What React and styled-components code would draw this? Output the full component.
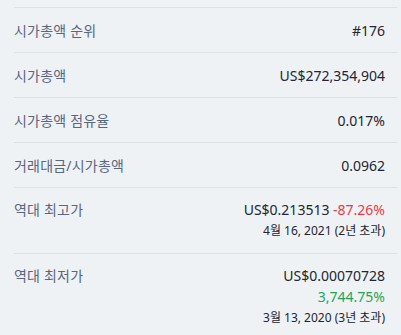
import styled, { createGlobalStyle } from "styled-components";

const GlobalStyle = createGlobalStyle`
  * { box-sizing: border-box; }
  body {
    margin: 0;
    background: #eff2f5;
    font-family: "Noto Sans", "Noto Sans CJK KR", sans-serif;
  }
`;

const stats = [
  { label: "시가총액 순위", value: "#176" },
  { label: "시가총액", value: "US$272,354,904" },
  { label: "시가총액 점유율", value: "0.017%" },
  { label: "거래대금/시가총액", value: "0.0962" },
];

function App() {
  return (
    <>
      <GlobalStyle />
      <Wrapper>
        <List>
          {stats.map((s) => (
            <Row key={s.label}>
              <Label>{s.label}</Label>
              <Values>
                <Value>{s.value}</Value>
              </Values>
            </Row>
          ))}
          <Row tall>
            <Label>역대 최고가</Label>
            <Values>
              <Value>
                US$0.213513 <Change down>-87.26%</Change>
              </Value>
              <DateText>4월 16, 2021 (2년 초과)</DateText>
            </Values>
          </Row>
          <Row tall>
            <Label>역대 최저가</Label>
            <Values>
              <Value>US$0.00070728</Value>
              <Value>
                <Change>3,744.75%</Change>
              </Value>
              <DateText>3월 13, 2020 (3년 초과)</DateText>
            </Values>
          </Row>
        </List>
      </Wrapper>
    </>
  );
}

export default App;

const Wrapper = styled.div`
  padding: 7px 4px 0 14px;
`;
const List = styled.ul`
  margin: 0;
  padding: 0;
  list-style: none;
`;
const Row = styled.li`
  display: flex;
  justify-content: space-between;
  align-items: flex-start;
  border-top: 1px solid #dde1e6;
  padding: ${(p) => (p.tall ? "11px 12px 12px 0" : "12px 12px 11px 0")};
`;
const Label = styled.div`
  font-size: 14px;
  line-height: 21px;
  color: #58667e;
  letter-spacing: 0.2px;
`;
const Values = styled.div`
  display: flex;
  flex-direction: column;
  align-items: flex-end;
`;
const Value = styled.div`
  font-size: 14px;
  line-height: 21px;
  color: #222531;
  white-space: nowrap;
`;
const Change = styled.span`
  color: ${(p) => (p.down ? "#ea3943" : "#1ea459")};
`;
const DateText = styled.div`
  margin-top: 1px;
  font-size: 12px;
  line-height: 20px;
  color: #222531;
`;
